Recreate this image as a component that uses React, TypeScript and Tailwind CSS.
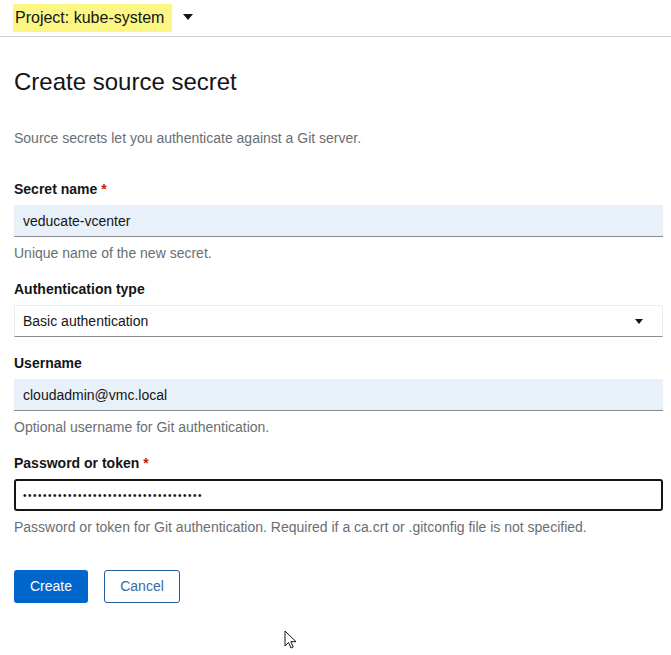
import { useState } from 'react';

const font = { fontFamily: '"Liberation Sans", Arial, sans-serif' };

function Label({ text, required }: { text: string; required?: boolean }) {
    return (
        <label className="block text-[14px] leading-[20px] font-bold text-[#151515] mb-[6px]">
            {text}
            {required && <span className="text-[#c9190b]"> *</span>}
        </label>
    );
}

function Helper({ text }: { text: string }) {
    return <p className="mt-[6px] text-[14px] leading-[20px] text-[#6a6e73]">{text}</p>;
}

export default function App() {
    const [name, setName] = useState('veducate-vcenter');
    const [user, setUser] = useState('cloudadmin@vmc.local');
    const [pass, setPass] = useState('••••••••••••••••••••••••••••••••••••');

    return (
        <div className="relative min-h-[655px] bg-white" style={font}>
            <div className="h-[37px] border-b border-[#d2d2d2] flex items-center pl-[13px] gap-[11px]">
                <div className="h-[28px] bg-[#fcf784] pl-[2px] pr-[8px] flex items-center text-[16px] text-[#151515]">
                    Project: kube-system
                </div>
                <svg width="10" height="6" viewBox="0 0 10 6" className="mt-[-2px]">
                    <path d="M0 0h10L5 6z" fill="#151515" />
                </svg>
            </div>

            <div className="pl-[14px] pr-[8px]">
                <h1 className="mt-[29px] text-[24px] leading-[32px] text-[#151515]">Create source secret</h1>
                <p className="mt-[30px] text-[14px] leading-[20px] text-[#6a6e73]">
                    Source secrets let you authenticate against a Git server.
                </p>

                <div className="mt-[31px]">
                    <Label text="Secret name" required />
                    <input
                        value={name}
                        onChange={(e) => setName(e.target.value)}
                        className="block w-full h-[32px] bg-[#e8f1fa] border-b border-[#8a8d90] px-[9px] text-[14px] text-[#151515] outline-none"
                    />
                    <Helper text="Unique name of the new secret." />
                </div>

                <div className="mt-[16px]">
                    <Label text="Authentication type" />
                    <div className="flex items-center justify-between h-[32px] border border-[#ededed] border-b-[#8a8d90] px-[8px] text-[14px] text-[#151515]">
                        <span>Basic authentication</span>
                        <svg width="8" height="5" viewBox="0 0 8 5" className="mr-[11px]">
                            <path d="M0 0h8L4 5z" fill="#151515" />
                        </svg>
                    </div>
                </div>

                <div className="mt-[16px]">
                    <Label text="Username" />
                    <input
                        value={user}
                        onChange={(e) => setUser(e.target.value)}
                        className="block w-full h-[32px] bg-[#e8f1fa] border-b border-[#8a8d90] px-[9px] text-[14px] text-[#151515] outline-none"
                    />
                    <Helper text="Optional username for Git authentication." />
                </div>

                <div className="mt-[16px]">
                    <Label text="Password or token" required />
                    <input
                        value={pass}
                        onChange={(e) => setPass(e.target.value)}
                        className="block w-full h-[32px] border-2 border-[#151515] rounded-[3px] px-[7px] text-[10px] tracking-[1.5px] text-[#151515] outline-none"
                    />
                    <Helper text="Password or token for Git authentication. Required if a ca.crt or .gitconfig file is not specified." />
                </div>

                <div className="mt-[33px] flex gap-[16px]">
                    <button className="h-[33px] w-[74px] rounded-[3px] bg-[#0066cc] text-white text-[14px]">Create</button>
                    <button className="h-[33px] w-[76px] rounded-[3px] border border-[#1f5f9e] text-[#3a68a0] text-[14px]">Cancel</button>
                </div>
            </div>

            <svg width="14" height="20" viewBox="0 0 14 20" className="absolute left-[284px] top-[630px]">
                <path d="M1 1v15l3.5-3.5 2.5 5.5 2.2-1-2.4-5.3H12z" fill="#fff" stroke="#151515" strokeWidth="1" strokeLinejoin="round" />
            </svg>
        </div>
    );
}
